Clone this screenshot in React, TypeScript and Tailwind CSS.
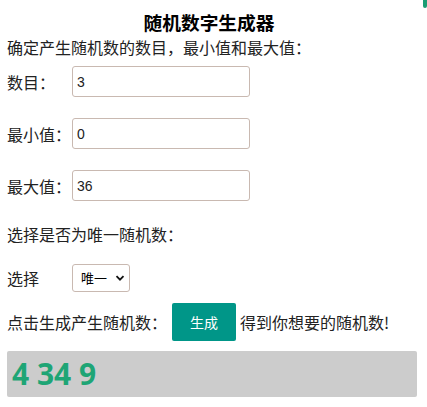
import React from 'react';

const cjk = '"Noto Sans CJK SC", "Noto Sans", sans-serif';

const Field = ({ label, value }: { label: string; value: string }) => (
  <div className="flex items-center h-[31px]">
    <span className="w-[65px] text-[16px] text-[#222]">{label}</span>
    <input
      readOnly
      value={value}
      className="w-[178px] h-[31px] border border-[#c9b9b1] rounded-[3px] px-[4px] text-[14px] text-[#222] outline-none"
      style={{ fontFamily: '"Liberation Sans", Arial, sans-serif' }}
    />
  </div>
);

export default function App() {
  return (
    <div className="relative w-[427px] h-[407px] bg-white overflow-hidden px-[7px]" style={{ fontFamily: cjk }}>
      {/* green sliver at top right */}
      <div className="absolute -top-[14px] right-0 w-[4px] h-[22px] rounded-full bg-[#1b9d74]" />

      <h3 className="pt-[11px] pr-[9px] text-center text-[18.72px] font-bold leading-[22px] text-black">
        随机数字生成器
      </h3>
      <p className="text-[16px] leading-[24px] text-[#222] mt-[2px]">确定产生随机数的数目，最小值和最大值：</p>

      <div className="flex flex-col gap-[21px] mt-[7px]">
        <Field label="数目：" value="3" />
        <Field label="最小值：" value="0" />
        <Field label="最大值：" value="36" />
      </div>

      <p className="text-[16px] leading-[24px] text-[#222] mt-[21px]">选择是否为唯一随机数：</p>

      <div className="flex items-center h-[28px] mt-[18px]">
        <span className="w-[65px] text-[16px] text-[#222]">选择</span>
        <div className="flex items-center justify-between w-[58px] h-[28px] border border-[#c9b9b1] rounded-[3px] pl-[8px] pr-[4px]">
          <span className="text-[13px] text-black">唯一</span>
          <svg width="10" height="10" viewBox="0 0 10 10">
            <path d="M1.5 3.2 L5 6.7 L8.5 3.2" fill="none" stroke="#111" strokeWidth="1.8" />
          </svg>
        </div>
      </div>

      <div className="flex items-center h-[38px] mt-[11px] text-[16px] text-[#222]">
        <span>点击生成产生随机数：</span>
        <button className="ml-[5px] w-[64px] h-[38px] bg-[#009688] text-white text-[14px] rounded-[2px]">生成</button>
        <span className="ml-[4px]">得到你想要的随机数!</span>
      </div>

      <div className="mt-[10px] h-[46px] w-[410px] bg-[#cccccc] rounded-[2px] flex items-center px-[5px]">
        <span
          className="text-[30px] font-bold text-[#1ea575] leading-none"
          style={{ fontFamily: '"Open Sans", sans-serif' }}
        >
          4 34 9
        </span>
      </div>
    </div>
  );
}
